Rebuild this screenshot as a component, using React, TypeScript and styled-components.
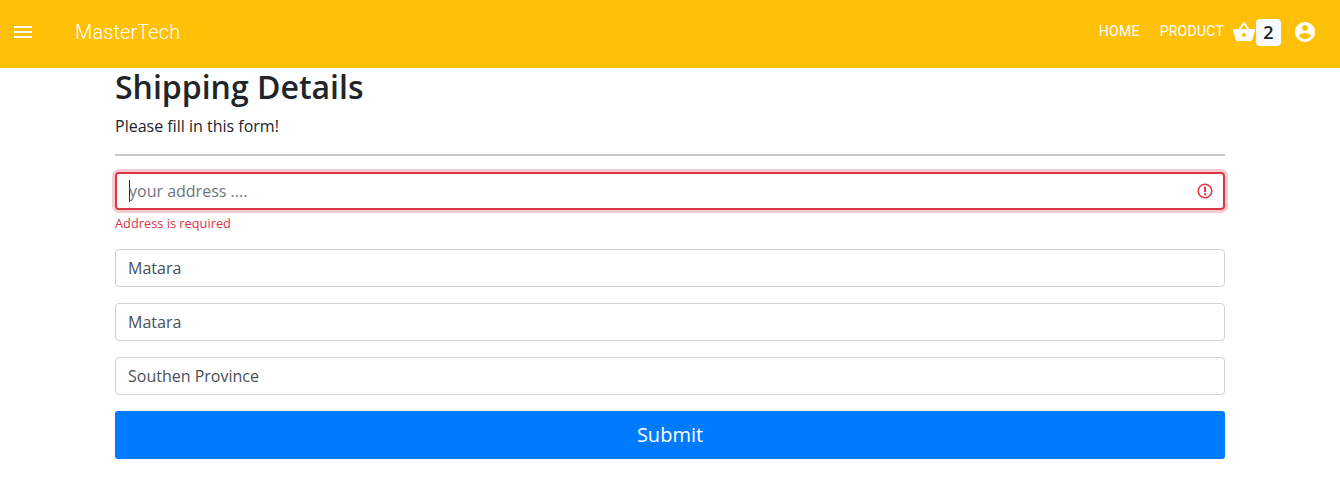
import React from 'react';
import styled, { createGlobalStyle } from 'styled-components';

const Global = createGlobalStyle`
  *, *::before, *::after { box-sizing: border-box; }
  body { margin: 0; background: #fff; color: #212529; font: 400 16px/24px "Open Sans", sans-serif; }
`;

const Bar = styled.header`
  display: flex;
  align-items: center;
  height: 68px;
  padding: 0 23px 4px 13px;
  background: #ffc107;
  color: #fff;
  font-family: Roboto, sans-serif;
`;
const Icon = styled.svg<{ $size: number }>`
  display: block;
  flex: none;
  width: ${p => p.$size}px;
  height: ${p => p.$size}px;
  fill: currentColor;
`;
const MenuButton = styled.button`
  display: flex;
  padding: 0;
  margin-left: -2px;
  border: 0;
  background: none;
  color: inherit;
`;
const Brand = styled.span`
  margin-left: 40px;
  font-size: 20px;
  font-weight: 300;
  line-height: 32px;
  letter-spacing: 0.1px;
`;
const Nav = styled.nav`
  display: flex;
  align-items: center;
  margin-left: auto;
`;
const NavLink = styled.a`
  margin-right: 20px;
  padding-bottom: 2px;
  font-size: 14px;
  font-weight: 400;
  line-height: 24px;
  letter-spacing: 0.25px;
  & + & { margin-right: 8px; }
`;
const Badge = styled.span`
  width: 25px;
  height: 27px;
  margin-right: 12px;
  border-radius: 4px;
  background: #f8f9fa;
  color: #212529;
  font-family: "Open Sans", sans-serif;
  font-size: 18px;
  font-weight: 600;
  line-height: 27px;
  text-align: center;
`;
const Form = styled.form`
  width: 1110px;
  margin: 0 auto;
`;
const Title = styled.h2`
  margin: 0 0 8px;
  font-size: 32px;
  font-weight: 600;
  line-height: 38px;
`;
const Intro = styled.p`
  margin: 0 0 16px;
`;
const Rule = styled.hr`
  height: 2px;
  margin: 0 0 16px;
  border: 0;
  background: #c8c8c8;
`;
const Field = styled.div`
  margin-bottom: 16px;
`;
const Control = styled.div<{ $invalid?: boolean }>`
  display: flex;
  align-items: center;
  justify-content: space-between;
  height: 38px;
  padding: 0 ${p => (p.$invalid ? 10 : 12)}px 0 12px;
  border: ${p => (p.$invalid ? '2px solid #dc3545' : '1px solid #ced4da')};
  border-radius: 4px;
  color: ${p => (p.$invalid ? '#6c757d' : '#495057')};
  box-shadow: ${p => (p.$invalid ? '0 0 0 3px rgba(220, 53, 69, .25)' : 'none')};
`;
const Caret = styled.span`
  flex: none;
  width: 1px;
  height: 22px;
  margin-right: -1px;
  background: #212529;
`;
const Value = styled.span`
  flex: 1;
`;
const ErrorIcon = styled.svg`
  width: 16px;
  height: 16px;
  fill: none;
  stroke: #dc3545;
`;
const ErrorText = styled.div`
  margin-top: 4px;
  color: #dc3545;
  font-size: 12.8px;
  line-height: 19px;
`;
const Submit = styled.button`
  display: block;
  width: 100%;
  height: 48px;
  padding: 0;
  border: 0;
  border-radius: 3px;
  background: #007bff;
  color: #fff;
  font: 400 20px/30px "Open Sans", sans-serif;
`;

export default function App() {
  return (
    <>
      <Global />
      <Bar>
        <MenuButton type="button" aria-label="Menu">
          <Icon $size={24} viewBox="0 0 24 24"><path d="M3 18h18v-2H3v2zm0-5h18v-2H3v2zm0-7v2h18V6H3z" /></Icon>
        </MenuButton>
        <Brand>MasterTech</Brand>
        <Nav>
          <NavLink>HOME</NavLink>
          <NavLink>PRODUCT</NavLink>
          <Icon $size={24} viewBox="0 0 24 24"><path d="M17.21 9l-4.38-6.56c-.19-.28-.51-.42-.83-.42-.32 0-.64.14-.83.43L6.79 9H2c-.55 0-1 .45-1 1 0 .09.01.18.04.27l2.54 9.27c.23.84 1 1.46 1.92 1.46h13c.92 0 1.69-.62 1.93-1.46l2.54-9.27L23 10c0-.55-.45-1-1-1h-4.79zM9 9l3-4.4L15 9H9zm3 8c-1.1 0-2-.9-2-2s.9-2 2-2 2 .9 2 2-.9 2-2 2z" /></Icon>
          <Badge>2</Badge>
          <Icon $size={24} viewBox="0 0 24 24"><path d="M12 2C6.48 2 2 6.48 2 12s4.48 10 10 10 10-4.48 10-10S17.52 2 12 2zm0 3c1.66 0 3 1.34 3 3s-1.34 3-3 3-3-1.34-3-3 1.34-3 3-3zm0 14.2c-2.5 0-4.71-1.28-6-3.22.03-1.99 4-3.08 6-3.08 1.99 0 5.97 1.09 6 3.08-1.29 1.94-3.5 3.22-6 3.22z" /></Icon>
        </Nav>
      </Bar>
      <Form>
        <Title>Shipping Details</Title>
        <Intro>Please fill in this form!</Intro>
        <Rule />
        <Field>
          <Control $invalid>
            <Caret />
            <Value>your address ....</Value>
            <ErrorIcon viewBox="0 0 16 16"><circle cx="8" cy="8" r="6.8" strokeWidth="1.5" /><path d="M8 3.7v5.3M8 10.3v2" strokeWidth="2" /></ErrorIcon>
          </Control>
          <ErrorText>Address is required</ErrorText>
        </Field>
        <Field><Control>Matara</Control></Field>
        <Field><Control>Matara</Control></Field>
        <Field><Control>Southen Province</Control></Field>
        <Submit type="button">Submit</Submit>
      </Form>
    </>
  );
}
